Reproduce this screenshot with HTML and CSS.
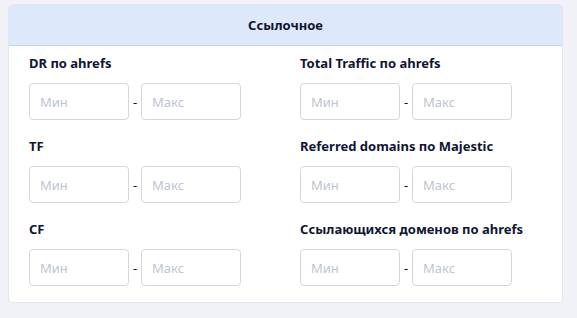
FILE: index.html
```html
<!DOCTYPE html>
<html lang="ru">
<head>
    <meta charset="UTF-8">
    <title>Ссылочное</title>
    <link rel="stylesheet" href="styles.css">
</head>
<body>
    <div class="filter-card">
        <div class="filter-header">Ссылочное</div>
        <div class="filter-body">
            <div class="filter-field">
                <div class="filter-label">DR по ahrefs</div>
                <div class="range">
                    <input class="range-input" type="text" placeholder="Мин">
                    <span class="range-dash">-</span>
                    <input class="range-input" type="text" placeholder="Макс">
                </div>
            </div>
            <div class="filter-field">
                <div class="filter-label">Total Traffic по ahrefs</div>
                <div class="range">
                    <input class="range-input" type="text" placeholder="Мин">
                    <span class="range-dash">-</span>
                    <input class="range-input" type="text" placeholder="Макс">
                </div>
            </div>
            <div class="filter-field">
                <div class="filter-label">TF</div>
                <div class="range">
                    <input class="range-input" type="text" placeholder="Мин">
                    <span class="range-dash">-</span>
                    <input class="range-input" type="text" placeholder="Макс">
                </div>
            </div>
            <div class="filter-field">
                <div class="filter-label">Referred domains по Majestic</div>
                <div class="range">
                    <input class="range-input" type="text" placeholder="Мин">
                    <span class="range-dash">-</span>
                    <input class="range-input" type="text" placeholder="Макс">
                </div>
            </div>
            <div class="filter-field">
                <div class="filter-label">CF</div>
                <div class="range">
                    <input class="range-input" type="text" placeholder="Мин">
                    <span class="range-dash">-</span>
                    <input class="range-input" type="text" placeholder="Макс">
                </div>
            </div>
            <div class="filter-field">
                <div class="filter-label">Ссылающихся доменов по ahrefs</div>
                <div class="range">
                    <input class="range-input" type="text" placeholder="Мин">
                    <span class="range-dash">-</span>
                    <input class="range-input" type="text" placeholder="Макс">
                </div>
            </div>
        </div>
    </div>
</body>
</html>
```

FILE: styles.css
```css
* {
    margin: 0;
    padding: 0;
    box-sizing: border-box;
    font-family: 'Noto Sans', 'Liberation Sans', sans-serif;
}

body {
    background: #f1f2f7;
    padding: 4px 14px 0 8px;
}

.filter-card {
    width: 555px;
    background: #ffffff;
    border: 1px solid #e3e6ee;
    border-radius: 4px;
    overflow: hidden;
}

.filter-header {
    height: 41px;
    background: #dde8fb;
    border-bottom: 1px solid #c5d4ee;
    display: flex;
    align-items: center;
    justify-content: center;
    font-size: 13px;
    font-weight: 700;
    color: #0f1533;
}

.filter-body {
    display: grid;
    grid-template-columns: 271px 1fr;
    row-gap: 18px;
    padding: 9px 20px 16px 20px;
}

.filter-label {
    font-size: 13px;
    font-weight: 700;
    line-height: 16px;
    color: #0f1533;
    margin-bottom: 12px;
}

.range {
    display: flex;
    align-items: center;
}

.range-input {
    width: 100px;
    height: 37px;
    border: 1px solid #d3d8e0;
    border-radius: 4px;
    padding: 0 10px;
    font-size: 13px;
    color: #0f1533;
    outline: none;
}

.range-input::placeholder {
    color: #bcc5d1;
}

.range-dash {
    width: 12px;
    text-align: center;
    font-size: 13px;
    color: #0f1533;
}
```
